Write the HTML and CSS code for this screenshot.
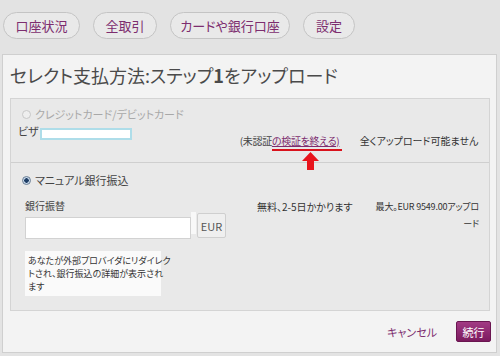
FILE: index.html
```html
<!DOCTYPE html>
<html lang="ja">
<head>
<meta charset="utf-8">
<link rel="stylesheet" href="styles.css">
</head>
<body>
<nav class="tabs">
  <a class="tab t1">口座状況</a>
  <a class="tab t2">全取引</a>
  <a class="tab t3">カードや銀行口座</a>
  <a class="tab t4">設定</a>
</nav>
<main class="panel">
  <h1 class="title">セレクト支払方法:ステップ<b>1</b>をアップロード</h1>
  <div class="box">
    <section class="sec sec1">
      <div class="radio-row disabled"><span class="radio"></span>クレジットカード/デビットカード</div>
      <div class="row1">
        <div class="visa"><span class="visa-label">ビザ</span><span class="visa-input"></span></div>
        <div class="verify">(未認証<span class="verify-link">の検証を終える)</span>
          <svg class="arrow" width="17" height="18" viewBox="0 0 17 18"><path d="M8.5 0 L17 9 L12 9 L12 18 L5 18 L5 9 L0 9 Z" fill="#e8141c"/></svg>
        </div>
        <div class="noupload">全くアップロード可能ません</div>
      </div>
    </section>
    <section class="sec sec2">
      <div class="radio-row"><span class="radio checked"></span>マニュアル銀行振込</div>
      <div class="row2">
        <div class="amount">
          <div class="amount-label">銀行振替</div>
          <div class="amount-field"><span class="amount-input"></span><span class="spin"></span><span class="cur">EUR</span></div>
        </div>
        <div class="fee">無料、2-5日かかります</div>
        <div class="max">最大。EUR 9549.00アップロ<br>ード</div>
      </div>
      <p class="note">あなたが外部プロバイダにリダイレク<br>トされ、銀行振込の詳細が表示され<br>ます</p>
    </section>
  </div>
  <div class="actions">
    <a class="cancel">キャンセル</a>
    <a class="next">続行</a>
  </div>
</main>
</body>
</html>
```
FILE: styles.css
```css
* { box-sizing: border-box; }
html, body { margin: 0; padding: 0; }
body {
  width: 500px;
  height: 356px;
  overflow: hidden;
  background: #e3e3e3;
  font-family: "Noto Sans CJK JP", "Noto Sans", sans-serif;
  font-feature-settings: "palt";
  color: #333;
}
.tabs {
  display: flex;
  gap: 13px;
  padding: 12px 0 0 3px;
  height: 39px;
}
.tab {
  display: flex;
  align-items: center;
  justify-content: center;
  height: 27px;
  border: 1px solid #c4c4c4;
  border-radius: 14px;
  background: #e9e9e9;
  color: #7d2d6f;
  font-size: 13px;
  white-space: nowrap;
}
.t1 { width: 77px; }
.t2 { width: 64px; }
.t3 { width: 120px; }
.t4 { width: 52px; }

.panel {
  margin: 15px 3px 0 2px;
  height: 299px;
  background: #f3f3f3;
  border: 1px solid #cfcfcf;
  display: flex;
  flex-direction: column;
}
.title {
  margin: 0;
  padding: 9px 0 0 7px;
  height: 43px;
  font-size: 18px;
  font-weight: normal;
  color: #4a4a4a;
  line-height: 22px;
  white-space: nowrap;
}
.title b { font-weight: bold; }

.box {
  margin: 0 6px 0 7px;
  height: 213px;
  background: #e9e9e9;
  border: 1px solid #d4d4d4;
}
.sec1 {
  height: 64px;
  border-bottom: 1px solid #cfcfcf;
  padding: 8px 0 0 7px;
  position: relative;
}
.radio-row {
  display: flex;
  align-items: center;
  font-size: 11px;
  color: #444;
  height: 14px;
  white-space: nowrap;
}
.radio-row.disabled { color: #a8a8a8; }
.radio {
  width: 9px;
  height: 9px;
  border-radius: 50%;
  border: 1px solid #c8c8c8;
  background: #eee;
  margin: 0 4px 0 4px;
  flex-shrink: 0;
}
.radio.checked {
  border: 1px solid #6a7f95;
  background: radial-gradient(circle, #1f3f66 0 2px, #c8d8ea 2.5px);
}
.row1 {
  display: flex;
  align-items: flex-start;
  font-size: 10px;
  white-space: nowrap;
}
.visa { display: flex; align-items: flex-start; padding-top: 4px; flex-shrink: 0; }
.visa-label { font-size: 11px; color: #444; line-height: 12px; }
.visa-input {
  display: block;
  width: 92px;
  height: 12px;
  margin-left: 1px;
  margin-top: 3px;
  background: #fff;
  border: 2px solid #aedde9;
}
.verify {
  position: relative;
  margin-left: 108px;
  padding-top: 12px;
  color: #444;
  width: 120px;
  flex-shrink: 0;
  letter-spacing: -0.3px;
}
.verify-link {
  color: #7d2d6f;
  text-decoration: underline;
  text-decoration-color: #7d2d6f;
  border-bottom: 2px solid #d9121c;
  padding-bottom: 1px;
  padding-right: 3px;
}
.arrow {
  position: absolute;
  left: 62px;
  top: 31px;
}
.noupload {
  padding-top: 12px;
  color: #333;
}

.sec2 { padding: 10px 0 0 7px; }
.row2 {
  display: flex;
  align-items: flex-start;
  margin-top: 13px;
  font-size: 10px;
}
.amount { width: 239px; padding-left: 7px; flex-shrink: 0; }
.amount-label { color: #444; font-size: 10px; line-height: 12px; }
.amount-field { display: flex; align-items: flex-start; }
.amount-input {
  display: block;
  width: 166px;
  height: 22px;
  margin-top: 5px;
  background: #fff;
  border: 1px solid #d2d2d2;
}
.spin {
  display: block;
  width: 5px;
  height: 22px;
  background: #f8f8f8;
}
.cur {
  display: flex;
  align-items: center;
  justify-content: center;
  width: 29px;
  height: 25px;
  margin-left: 1px;
  margin-top: 1px;
  border: 1px solid #cfcfcf;
  border-radius: 2px;
  background: #efefef;
  color: #555;
  font-size: 11px;
}
.fee { width: 110px; color: #333; line-height: 14px; white-space: nowrap; flex-shrink: 0; }
.max {
  width: 112px;
  color: #333;
  text-align: right;
  line-height: 17px;
  margin-top: -2px;
  white-space: nowrap;
  font-size: 9px;
  letter-spacing: -0.2px;
}
.note {
  margin: 12px 0 0 7px;
  width: 136px;
  padding: 3px 2px 3px 3px;
  background: #fafafa;
  font-size: 9px;
  line-height: 13px;
  color: #333;
  white-space: nowrap;
}

.actions {
  flex: 1;
  display: flex;
  justify-content: flex-end;
  align-items: center;
  padding-right: 5px;
  gap: 19px;
}
.cancel { color: #7d2d6f; font-size: 11px; }
.next {
  display: flex;
  align-items: center;
  justify-content: center;
  width: 35px;
  height: 21px;
  background: linear-gradient(#a23a84, #7c1b5f);
  border: 1px solid #6a1550;
  border-radius: 2px;
  color: #fff;
  font-size: 11px;
}
```
